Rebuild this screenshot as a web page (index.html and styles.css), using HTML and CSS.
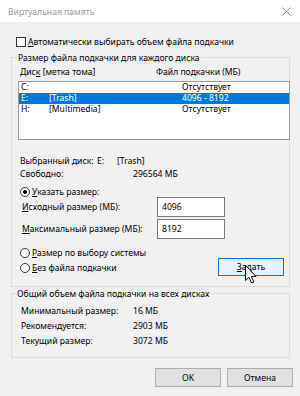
FILE: index.html
```html
<!DOCTYPE html>
<html lang="ru">
<head>
  <meta charset="UTF-8" />
  <title>Виртуальная память</title>
  <link rel="stylesheet" href="styles.css">
</head>
<body>
  <div class="window">
    <div class="titlebar">
      <span class="title">Виртуальная память</span>
      <svg class="close" width="9" height="9" viewBox="0 0 9 9">
        <path d="M0.5 0.5 L8.5 8.5 M8.5 0.5 L0.5 8.5" stroke="#8a8a8a" stroke-width="1" fill="none"/>
      </svg>
    </div>

    <div class="content">
      <div class="check-row">
        <span class="checkbox"></span>
        <span><u>А</u>втоматически выбирать объем файла подкачки</span>
      </div>

      <div class="group group-drives">
        <div class="legend">Размер файла подкачки для каждого диска</div>
        <div class="list-head">
          <span class="head-disk">Дис<u>к</u> [метка тома]</span>
          <span>Файл подкачки (МБ)</span>
        </div>
        <div class="listbox">
          <div class="list-row">
            <span class="c-letter">C:</span><span class="c-label"></span><span>Отсутствует</span>
          </div>
          <div class="list-row selected">
            <span class="c-letter">E:</span><span class="c-label">[Trash]</span><span>4096 - 8192</span>
          </div>
          <div class="list-row">
            <span class="c-letter">H:</span><span class="c-label">[Multimedia]</span><span>Отсутствует</span>
          </div>
        </div>

        <div class="info-row">
          <span class="info-label">Выбранный диск:</span>
          <span class="info-letter">E:</span>
          <span>[Trash]</span>
        </div>
        <div class="info-row">
          <span class="info-label wide">Свободно:</span>
          <span>296564 МБ</span>
        </div>

        <div class="radio-row first">
          <span class="radio checked"></span>
          <span><u>У</u>казать размер:</span>
        </div>
        <div class="field-row">
          <span class="field-label"><u>И</u>сходный размер (МБ):</span>
          <span class="input">4096</span>
        </div>
        <div class="field-row second">
          <span class="field-label"><u>М</u>аксимальный размер (МБ):</span>
          <span class="input">8192</span>
        </div>

        <div class="bottom-row">
          <div class="radios">
            <div class="radio-row">
              <span class="radio"></span>
              <span><u>Р</u>азмер по выбору системы</span>
            </div>
            <div class="radio-row">
              <span class="radio"></span>
              <span><u>Б</u>ез файла подкачки</span>
            </div>
          </div>
          <button class="btn btn-set"><u>З</u>адать</button>
        </div>
      </div>

      <div class="group group-total">
        <div class="legend">Общий объем файла подкачки на всех дисках</div>
        <div class="total-row"><span class="total-label">Минимальный размер:</span><span>16 МБ</span></div>
        <div class="total-row"><span class="total-label">Рекомендуется:</span><span>2903 МБ</span></div>
        <div class="total-row"><span class="total-label">Текущий размер:</span><span>3072 МБ</span></div>
      </div>
    </div>

    <div class="actions">
      <button class="btn">OK</button>
      <button class="btn">Отмена</button>
    </div>

    <svg class="cursor" width="13" height="20" viewBox="0 0 13 20">
      <path d="M0.5 0.5 L0.5 15.5 L4 12.2 L6.5 18 L8.8 17 L6.4 11.4 L11 11.4 Z" fill="#fff" stroke="#000" stroke-width="1" stroke-linejoin="miter"/>
    </svg>
  </div>
</body>
</html>
```

FILE: styles.css
```css
* {
  box-sizing: border-box;
}
body {
  margin: 0;
  font-family: "Noto Sans", "Open Sans", sans-serif;
  font-size: 8.6px;
  color: #000;
}
span {
  white-space: nowrap;
  flex-shrink: 0;
}
u {
  text-decoration-thickness: 1px;
  text-underline-offset: 1px;
}
.window {
  position: relative;
  width: 300px;
  height: 396px;
  background-color: #f0f0f0;
  overflow: hidden;
}
.titlebar {
  height: 22px;
  background-color: #fff;
  display: flex;
  align-items: center;
  justify-content: space-between;
  padding: 2px 9px 0 8px;
}
.title {
  color: #999;
}
.close {
  display: block;
  margin-top: -2px;
}
.content {
  padding: 0 10px 0 11px;
}
.check-row {
  display: flex;
  align-items: center;
  height: 12px;
  margin-top: 14px;
  padding-left: 5px;
}
.checkbox {
  width: 10px;
  height: 10px;
  border: 1px solid #333;
  background-color: #fff;
  margin-right: 2px;
}
.group {
  border: 1px solid #dcdcdc;
  margin-top: 9px;
}
.group-total {
  margin-top: 6px;
  padding-bottom: 8px;
}
.group-drives {
  padding-bottom: 10px;
}
.legend {
  width: fit-content;
  margin: -6px 0 0 5px;
  padding: 0 1px;
  line-height: 12px;
  background-color: #f0f0f0;
}
.group-total .legend {
  margin-left: 4px;
}
.list-head {
  display: flex;
  line-height: 12px;
  margin-top: 2px;
  padding-left: 8px;
}
.head-disk {
  width: 136px;
}
.listbox {
  width: 272px;
  height: 59px;
  margin: 3px 0 0 6px;
  border: 1px solid #9a9a9a;
  background-color: #fff;
}
.list-row {
  display: flex;
  line-height: 11px;
  height: 11px;
  padding-left: 2px;
}
.list-row.selected {
  background-color: #0078d7;
  color: #fff;
}
.c-letter {
  width: 28px;
}
.c-label {
  width: 133px;
}
.info-row {
  display: flex;
  line-height: 13px;
  padding-left: 8px;
}
.listbox + .info-row {
  margin-top: 15px;
}
.info-label {
  width: 77px;
}
.info-label.wide {
  width: 113px;
}
.info-letter {
  width: 20px;
}
.radio-row {
  display: flex;
  align-items: center;
  height: 12px;
  padding-left: 8px;
}
.radio-row.first {
  height: 10px;
  margin-top: 6px;
}
.radio-row + .radio-row {
  margin-top: 3px;
}
.radio {
  width: 10px;
  height: 10px;
  border: 1px solid #333;
  border-radius: 50%;
  background-color: #fff;
  margin-right: 2px;
  position: relative;
}
.radio.checked::after {
  content: "";
  position: absolute;
  left: 2px;
  top: 2px;
  width: 4px;
  height: 4px;
  border-radius: 50%;
  background-color: #000;
}
.field-row {
  display: flex;
  align-items: center;
  height: 20px;
  padding-left: 10px;
}
.field-row.second {
  margin-top: 2px;
}
.field-label {
  width: 135px;
}
.input {
  width: 68px;
  height: 20px;
  border: 1px solid #7a7a7a;
  background-color: #fff;
  padding-left: 4px;
  line-height: 18px;
}
.bottom-row {
  display: flex;
  align-items: flex-end;
  margin-top: 8px;
}
.radios {
  padding-bottom: 2px;
}
.btn {
  font-family: inherit;
  font-size: inherit;
  color: #000;
  width: 66px;
  height: 19px;
  padding: 0;
  border: 1px solid #adadad;
  background-color: #e1e1e1;
}
.btn-set {
  margin-left: auto;
  margin-right: 5px;
  height: 18px;
  border-color: #0078d7;
  background-color: #e5f1fb;
}
.total-row {
  display: flex;
  line-height: 15px;
  padding-left: 9px;
}
.legend + .total-row {
  margin-top: 4px;
}
.total-label {
  width: 112px;
}
.actions {
  display: flex;
  justify-content: flex-end;
  gap: 6px;
  margin-top: 10px;
  padding-right: 7px;
}
.cursor {
  position: absolute;
  left: 245px;
  top: 265px;
}
```
